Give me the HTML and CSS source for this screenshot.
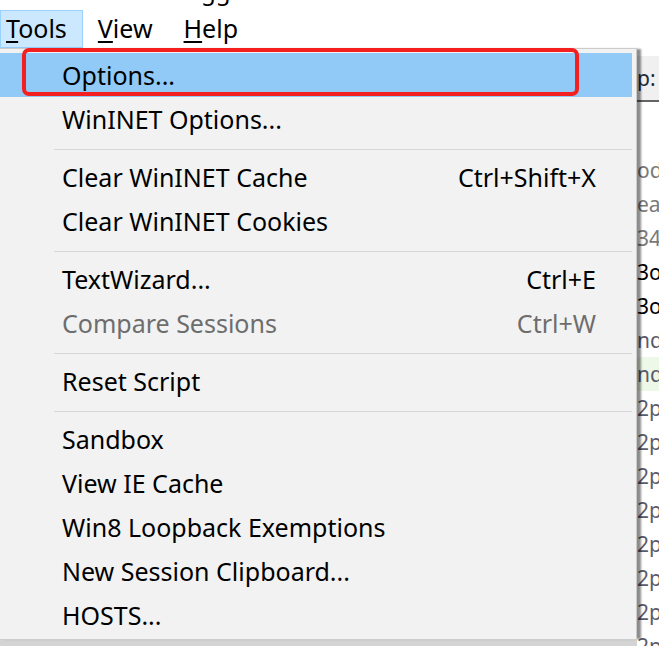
FILE: index.html
```html
<!DOCTYPE html>
<html lang="en">
<head>
    <meta charset="UTF-8">
    <meta name="viewport" content="width=device-width, initial-scale=1.0">
    <title>Fiddler Web Debugger - Tools</title>
    <link rel="stylesheet" href="styles.css">
</head>
<body>

<div class="title"><span>Fiddler Web Debugger</span></div>

<div class="menubar">
    <span class="menubar-item active"><u>T</u>ools</span>
    <span class="menubar-item"><u>V</u>iew</span>
    <span class="menubar-item"><u>H</u>elp</span>
</div>

<div class="workspace">
    <div class="menu">
        <div class="menu-item selected"><span>Options...</span></div>
        <div class="menu-item"><span>WinINET Options...</span></div>
        <div class="separator"></div>
        <div class="menu-item"><span>Clear WinINET Cache</span><span>Ctrl+Shift+X</span></div>
        <div class="menu-item"><span>Clear WinINET Cookies</span></div>
        <div class="separator"></div>
        <div class="menu-item"><span>TextWizard...</span><span>Ctrl+E</span></div>
        <div class="menu-item disabled"><span>Compare Sessions</span><span>Ctrl+W</span></div>
        <div class="separator"></div>
        <div class="menu-item"><span>Reset Script</span></div>
        <div class="separator"></div>
        <div class="menu-item"><span>Sandbox</span></div>
        <div class="menu-item"><span>View IE Cache</span></div>
        <div class="menu-item"><span>Win8 Loopback Exemptions</span></div>
        <div class="menu-item"><span>New Session Clipboard...</span></div>
        <div class="menu-item"><span>HOSTS...</span></div>
    </div>

    <div class="panel">
        <div class="panel-header">p: 200</div>
        <div class="panel-rows">
            <div class="row light">odes</div>
            <div class="row light">earch</div>
            <div class="row light">343</div>
            <div class="row dark">3oo</div>
            <div class="row dark">3oo</div>
            <div class="row">nd</div>
            <div class="row green">nd</div>
            <div class="row">2p</div>
            <div class="row">2p</div>
            <div class="row">2p</div>
            <div class="row">2p</div>
            <div class="row">2p</div>
            <div class="row">2p</div>
            <div class="row">2p</div>
            <div class="row">2p</div>
        </div>
    </div>

    <!-- red highlight drawn over the first item -->
    <div class="callout"></div>
</div>

</body>
</html>
```

FILE: styles.css
```css
body {
    font-family: 'Noto Sans', 'Open Sans', sans-serif;
    margin: 0;
    padding: 0;
    height: 646px;
    overflow: hidden;
    background-color: #ffffff;
    color: #000000;
}

.title {
    height: 10px;
    overflow: hidden;
}

.title span {
    display: block;
    margin-top: -21px;
    font-size: 24px;
    line-height: 24px;
    white-space: nowrap;
}

.menubar {
    display: flex;
    gap: 9px;
    height: 38px;
    font-size: 25px;
}

.menubar-item {
    padding: 0 15px 0 5px;
    line-height: 35px;
    border: 1px solid transparent;
}

.menubar-item.active {
    background-color: #cce8ff;
    border-color: #99d1ff;
}

.menubar-item u {
    text-underline-offset: 3px;
}

.workspace {
    position: relative;
    display: flex;
    align-items: flex-start;
    height: 598px;
    background-color: #d4d4d4;
}

.menu {
    position: relative;
    z-index: 1;
    width: 632px;
    margin-left: -1px;
    padding: 4px 4px 2px 0;
    background-color: #f2f2f2;
    border: 1px solid #cccccc;
    box-shadow: 5px 0 2px -1px rgba(0, 0, 0, 0.45);
    font-size: 25px;
}

.menu-item {
    display: flex;
    justify-content: space-between;
    height: 44px;
    line-height: 44px;
    padding: 0 36px 0 62px;
    white-space: nowrap;
}

.menu-item.selected {
    background-color: #91c9f7;
}

.menu-item.disabled {
    color: #6d6d6d;
}

.separator {
    height: 1px;
    margin: 8px 0 5px 54px;
    background-color: #d7d7d7;
}

.panel {
    flex: 1;
    align-self: stretch;
    overflow: hidden;
    background-color: #ffffff;
    font-size: 21px;
    white-space: nowrap;
}

.panel-header {
    margin-top: 8px;
    height: 44px;
    line-height: 44px;
    background-color: #f0f0f0;
    border-bottom: 2px solid #646464;
    color: #1f2a3a;
}

.panel-rows {
    padding-top: 51px;
}

.row {
    height: 34px;
    line-height: 34px;
    color: #5b5b6b;
}

.row.light {
    color: #7a7a7a;
}

.row.dark {
    color: #000000;
}

.row.green {
    background-color: #eef8e8;
}

.callout {
    position: absolute;
    z-index: 2;
    left: 22px;
    top: 0;
    width: 549px;
    height: 40px;
    border: 4px solid #f42020;
    border-radius: 7px;
}
```
